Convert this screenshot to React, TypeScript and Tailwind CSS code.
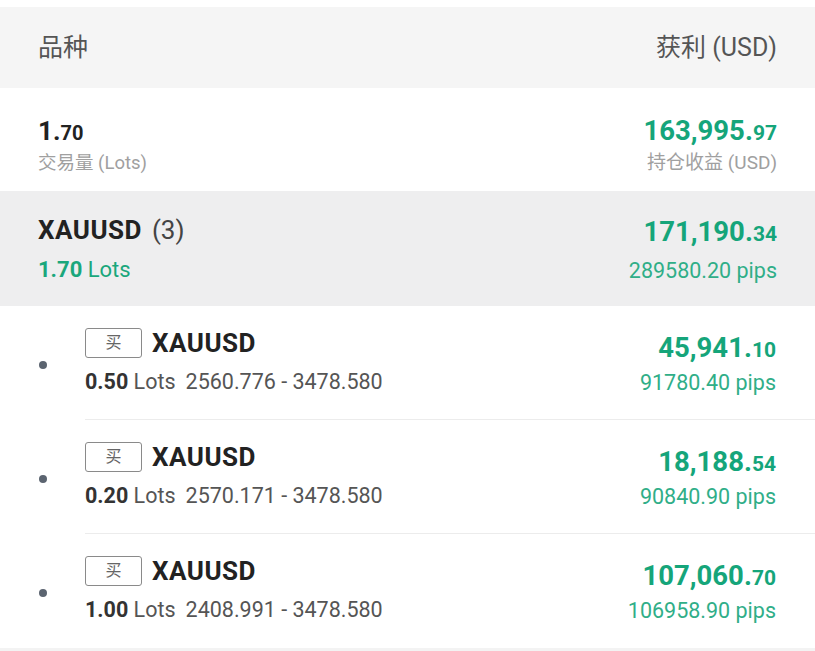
import React from "react";

const font = { fontFamily: 'Roboto, "Noto Sans CJK SC", sans-serif' };

function Amount({ big, small, size }: { big: string; small: string; size: string }) {
  return (
    <div className={`font-bold text-[#15a57a] leading-[30px] ${size}`}>
      {big}
      <span className="text-[21px]">{small}</span>
    </div>
  );
}

const items = [
  { lots: "0.50", range: "2560.776 - 3478.580", big: "45,941.", small: "10", pips: "91780.40 pips" },
  { lots: "0.20", range: "2570.171 - 3478.580", big: "18,188.", small: "54", pips: "90840.90 pips" },
  { lots: "1.00", range: "2408.991 - 3478.580", big: "107,060.", small: "70", pips: "106958.90 pips" },
];

export default function App() {
  return (
    <div className="w-[815px] h-[651px] bg-white overflow-hidden" style={font}>
      <div className="h-[7px] bg-white" />
      <div className="h-[81px] bg-[#f5f5f5] flex items-center justify-between px-[38px] text-[25px] text-[#555]">
        <span>品种</span>
        <span>获利 (USD)</span>
      </div>
      <div className="h-[103px] bg-white flex justify-between px-[38px] pt-[28px]">
        <div>
          <div className="font-bold text-[26px] leading-[30px] text-[#222]">
            1.<span className="text-[20px]">70</span>
          </div>
          <div className="text-[18.5px] leading-[24px] mt-[3px] text-[#a0a0a0]">交易量 (Lots)</div>
        </div>
        <div className="flex flex-col items-end">
          <Amount big="163,995." small="97" size="text-[27.5px]" />
          <div className="text-[19px] leading-[24px] mt-[3px] text-[#a0a0a0]">持仓收益 (USD)</div>
        </div>
      </div>
      <div className="h-[115px] bg-[#eeeeef] flex justify-between px-[38px] pt-[23px]">
        <div>
          <div className="text-[26px] leading-[32px] text-[#222]">
            <span className="font-bold tracking-[0.5px]">XAUUSD</span>
            <span className="ml-[10px] text-[#444]">(3)</span>
          </div>
          <div className="text-[22px] leading-[28px] mt-[10px] text-[#1aa77c]">
            <span className="font-bold">1.70</span> Lots
          </div>
        </div>
        <div className="flex flex-col items-end pt-[3px]">
          <Amount big="171,190." small="34" size="text-[27.5px]" />
          <div className="text-[21.5px] leading-[28px] mt-[8px] text-[#30ae88]">289580.20 pips</div>
        </div>
      </div>
      {items.map((it, i) => (
        <div key={i} className="h-[114px] flex bg-white">
          <div className="w-[85px] flex items-center pl-[39px] pt-[4px]">
            <div className="w-[8px] h-[8px] rounded-full bg-[#5b6470]" />
          </div>
          <div
            className={`flex-1 flex justify-between pr-[39px] pt-[21px] ${i < 2 ? "border-b border-[#ececec]" : ""}`}
          >
            <div>
              <div className="flex items-center h-[32px]">
                <div className="w-[57px] h-[30px] border-[1.5px] border-[#8a8a8a] rounded-[3px] flex items-center justify-center text-[16px] text-[#666]">
                  买
                </div>
                <span className="ml-[10px] font-bold text-[26px] tracking-[0.5px] text-[#222]">XAUUSD</span>
              </div>
              <div className="text-[21.5px] leading-[26px] mt-[10px] text-[#555]">
                <span className="font-bold text-[#333]">{it.lots}</span>
                <span> Lots</span>
                <span className="ml-[10px]">{it.range}</span>
              </div>
            </div>
            <div className="flex flex-col items-end pt-[6px]">
              <Amount big={it.big} small={it.small} size="text-[27.5px]" />
              <div className="text-[21.5px] leading-[28px] mt-[4px] text-[#30ae88]">{it.pips}</div>
            </div>
          </div>
        </div>
      ))}
      <div className="h-[10px] bg-[#f3f3f3]" />
    </div>
  );
}
